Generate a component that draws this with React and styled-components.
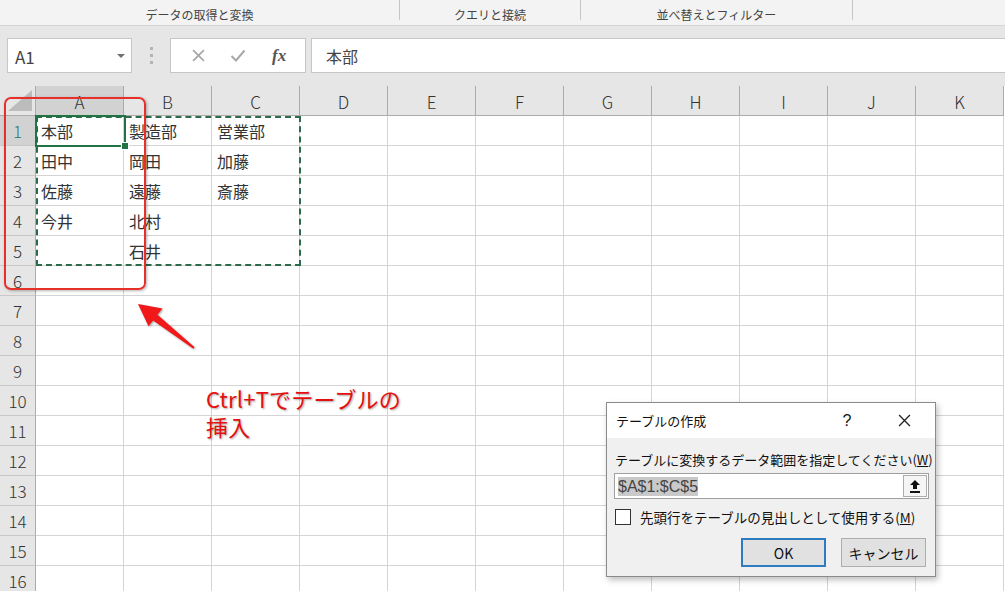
import React from 'react';
import styled, { createGlobalStyle } from 'styled-components';

const GlobalStyle = createGlobalStyle`
  html, body {
    margin: 0;
    padding: 0;
    background: #fff;
    overflow: hidden;
  }
  body {
    font-family: "Noto Sans CJK JP", "Noto Sans", sans-serif;
  }
`;

const COLS = ['A', 'B', 'C', 'D', 'E', 'F', 'G', 'H', 'I', 'J', 'K'];
const DATA = {
  1: ['本部', '製造部', '営業部'],
  2: ['田中', '岡田', '加藤'],
  3: ['佐藤', '遠藤', '斎藤'],
  4: ['今井', '北村', ''],
  5: ['', '石井', ''],
};
const ROWS = Array.from({ length: 16 }, (_, i) => i + 1);

const Page = styled.div`
  position: relative;
  width: 1005px;
  height: 591px;
  overflow: hidden;
  background: #fff;
`;

/* ribbon group labels */
const Ribbon = styled.div`
  display: flex;
  height: 25px;
  background: #f3f3f3;
  border-bottom: 1px solid #d4d4d4;
`;

const RibbonGroup = styled.div`
  width: ${p => p.w}px;
  height: 20px;
  flex-shrink: 0;
  border-right: ${p => (p.last ? 'none' : '1px solid #c6c6c6')};
  display: flex;
  justify-content: center;
  align-items: center;
  font-size: 12px;
  color: #444;
  padding-top: 9px;
  box-sizing: border-box;
`;

/* formula bar */
const FormulaArea = styled.div`
  display: flex;
  align-items: flex-start;
  height: 60px;
  background: #e6e6e6;
  padding: 12px 0 0 7px;
  box-sizing: border-box;
`;

const NameBox = styled.div`
  width: 125px;
  height: 35px;
  box-sizing: border-box;
  background: #fff;
  border: 1px solid #c6c6c6;
  display: flex;
  align-items: center;
  justify-content: space-between;
  padding: 2px 6px 0 7px;
  font-size: 17px;
  color: #444;
`;

const Caret = styled.span`
  width: 0;
  height: 0;
  border-left: 4px solid transparent;
  border-right: 4px solid transparent;
  border-top: 4px solid #707070;
  margin-top: -2px;
`;

const Grip = styled.div`
  width: 38px;
  height: 35px;
  display: flex;
  flex-direction: column;
  align-items: center;
  justify-content: center;
  gap: 4px;
  span {
    width: 3px;
    height: 3px;
    background: #b4b4b4;
  }
`;

const ButtonBox = styled.div`
  width: 136px;
  height: 35px;
  box-sizing: border-box;
  background: #fff;
  border: 1px solid #c6c6c6;
  display: flex;
  align-items: center;
  justify-content: space-around;
  padding: 0 6px 0 8px;
  margin-right: 5px;
`;

const Fx = styled.span`
  font-family: "Liberation Serif", serif;
  font-style: italic;
  font-weight: bold;
  font-size: 17px;
  color: #555;
`;

const FormulaInput = styled.div`
  flex: 1;
  height: 35px;
  box-sizing: border-box;
  background: #fff;
  border: 1px solid #c6c6c6;
  border-right: none;
  display: flex;
  align-items: center;
  padding-left: 14px;
  font-size: 16px;
  color: #444;
`;

/* sheet grid */
const Sheet = styled.div`
  display: grid;
  grid-template-columns: 36px repeat(11, 88px);
  grid-auto-rows: 30px;
`;

const Corner = styled.div`
  background: #e6e6e6;
  border-right: 1px solid #ababab;
  border-bottom: 1px solid #ababab;
  display: flex;
  align-items: flex-end;
  justify-content: flex-end;
  padding: 0 3px 4px 0;
  box-sizing: border-box;
  &::after {
    content: '';
    width: 0;
    height: 0;
    border-left: 24px solid transparent;
    border-bottom: 21px solid #bcbcbc;
  }
`;

const ColHead = styled.div`
  background: ${p => (p.active ? '#d2d2d2' : '#e6e6e6')};
  border-right: 1px solid #ababab;
  border-bottom: 1px solid #ababab;
  box-sizing: border-box;
  display: flex;
  align-items: center;
  justify-content: center;
  font-size: 17px;
  font-weight: 300;
  color: #333;
  padding-top: 2px;
`;

const RowHead = styled.div`
  background: ${p => (p.active ? '#d2d2d2' : '#e6e6e6')};
  border-right: 1px solid #ababab;
  border-bottom: 1px solid #c8c8c8;
  box-sizing: border-box;
  display: flex;
  align-items: center;
  justify-content: center;
  font-size: 17px;
  font-weight: 300;
  color: ${p => (p.active ? '#2a7a68' : '#333')};
`;

const Cell = styled.div`
  border-right: 1px solid #d4d4d4;
  border-bottom: 1px solid #d4d4d4;
  box-sizing: border-box;
  display: flex;
  align-items: center;
  padding: 1px 0 0 5px;
  font-size: 16px;
  color: #333;
  white-space: nowrap;
`;

/* overlays over the sheet */
const SelectedCell = styled.div`
  position: absolute;
  left: 35px;
  top: 115px;
  width: 91px;
  height: 32px;
  box-sizing: border-box;
  border: 2px solid #217346;
  &::after {
    content: '';
    position: absolute;
    right: -5px;
    bottom: -5px;
    width: 6px;
    height: 6px;
    background: #217346;
    border: 1px solid #fff;
  }
`;

const MarchingAnts = styled.div`
  position: absolute;
  left: 36px;
  top: 116px;
  width: 265px;
  height: 150px;
  box-sizing: border-box;
  border: 2px dashed #2d6a4a;
`;

const RedFrame = styled.div`
  position: absolute;
  left: 4px;
  top: 97px;
  width: 142px;
  height: 193px;
  box-sizing: border-box;
  border: 2px solid #e8302a;
  border-radius: 7px;
  box-shadow: 1px 1px 3px rgba(0, 0, 0, 0.3);
`;

const ArrowSvg = styled.svg`
  position: absolute;
  left: 130px;
  top: 295px;
  overflow: visible;
`;

const Note = styled.div`
  position: absolute;
  left: 206px;
  top: 384px;
  font-size: 22px;
  line-height: 28px;
  color: #e41010;
  text-shadow: 1px 1px 2px rgba(0, 0, 0, 0.35);
  letter-spacing: 0.2px;
`;

/* dialog */
const Dialog = styled.div`
  position: absolute;
  left: 606px;
  top: 402px;
  width: 330px;
  height: 175px;
  box-sizing: border-box;
  border: 1px solid #8a8a8a;
  background: #f0f0f0;
  box-shadow: 2px 3px 6px rgba(0, 0, 0, 0.25);
  display: flex;
  flex-direction: column;
  font-size: 13px;
  color: #111;
`;

const TitleBar = styled.div`
  height: 35px;
  background: #fff;
  display: flex;
  align-items: center;
  padding: 0 0 0 9px;
`;

const Title = styled.div`
  flex: 1;
`;

const Help = styled.div`
  width: 20px;
  font-family: "Liberation Sans", sans-serif;
  font-size: 16px;
  text-align: center;
  margin-right: 37px;
`;

const Close = styled.div`
  width: 20px;
  margin-right: 21px;
  display: flex;
  justify-content: center;
`;

const Body = styled.div`
  padding: 13px 7px 0 7px;
  display: flex;
  flex-direction: column;
`;

const Label = styled.div`
  line-height: 18px;
  padding-left: 1px;
  white-space: nowrap;
  u {
    text-decoration: underline;
  }
`;

const RangeField = styled.div`
  margin-top: 4px;
  height: 26px;
  width: 315px;
  box-sizing: border-box;
  border: 1px solid #a0a0a0;
  background: #fff;
  display: flex;
  align-items: center;
`;

const RangeText = styled.div`
  flex: 1;
  padding-left: 3px;
  span {
    font-family: "Liberation Sans", sans-serif;
    font-size: 16px;
    color: #444;
    background: #c9c9c9;
    padding: 1px 0;
  }
`;

const CollapseBtn = styled.div`
  width: 24px;
  height: 22px;
  margin-right: 1px;
  box-sizing: border-box;
  border: 1px solid #adadad;
  background: #f5f5f5;
  display: flex;
  align-items: center;
  justify-content: center;
`;

const CheckRow = styled.label`
  display: flex;
  align-items: center;
  margin-top: 8px;
  gap: 9px;
  padding-left: 1px;
  white-space: nowrap;
  font-size: 13.5px;
`;

const Box = styled.span`
  width: 16px;
  height: 16px;
  box-sizing: border-box;
  border: 1px solid #333;
  background: #fff;
`;

const Buttons = styled.div`
  display: flex;
  justify-content: flex-end;
  gap: 15px;
  margin-top: 11px;
  padding-right: 2px;
`;

const Button = styled.div`
  width: 85px;
  height: 29px;
  box-sizing: border-box;
  border: ${p => (p.primary ? '2px solid #2e7bc0' : '1px solid #adadad')};
  background: #e1e1e1;
  display: flex;
  align-items: center;
  justify-content: center;
  font-size: 14px;
`;

const XIcon = ({ size, color, width }) => (
  <svg width={size} height={size} viewBox="0 0 12 12">
    <path d="M1 1 L11 11 M11 1 L1 11" stroke={color} strokeWidth={width} fill="none" />
  </svg>
);

const CheckIcon = () => (
  <svg width="16" height="13" viewBox="0 0 16 13">
    <path d="M1.5 7 L6 11.5 L14.5 1.5" stroke="#a8a8a8" strokeWidth="2" fill="none" />
  </svg>
);

const UpIcon = () => (
  <svg width="12" height="14" viewBox="0 0 12 14">
    <path d="M6 1 L11 6 L8 6 L8 10 L4 10 L4 6 L1 6 Z" fill="#111" />
    <rect x="1" y="12" width="10" height="2" fill="#111" />
  </svg>
);

const App = () => {
  return (
    <Page>
      <GlobalStyle />
      <Ribbon>
        <RibbonGroup w={400}>データの取得と変換</RibbonGroup>
        <RibbonGroup w={181}>クエリと接続</RibbonGroup>
        <RibbonGroup w={272}>並べ替えとフィルター</RibbonGroup>
        <RibbonGroup w={152} last />
      </Ribbon>

      <FormulaArea>
        <NameBox>
          A1
          <Caret />
        </NameBox>
        <Grip>
          <span />
          <span />
          <span />
        </Grip>
        <ButtonBox>
          <XIcon size={13} color="#a8a8a8" width={1.6} />
          <CheckIcon />
          <Fx>fx</Fx>
        </ButtonBox>
        <FormulaInput>本部</FormulaInput>
      </FormulaArea>

      <Sheet>
        <Corner />
        {COLS.map(c => (
          <ColHead key={c} active={c === 'A'}>{c}</ColHead>
        ))}
        {ROWS.map(r => (
          <React.Fragment key={r}>
            <RowHead active={r === 1}>{r}</RowHead>
            {COLS.map((c, i) => (
              <Cell key={c}>{(DATA[r] && DATA[r][i]) || ''}</Cell>
            ))}
          </React.Fragment>
        ))}
      </Sheet>

      <MarchingAnts />
      <SelectedCell />
      <RedFrame />

      <ArrowSvg width="70" height="60" viewBox="0 0 70 60">
        <polygon
          points="8,9 32.5,13.5 27.5,19.8 64.6,52.2 63.4,53.8 23.1,25.4 18.5,31.3"
          fill="#f01818"
          style={{ filter: 'drop-shadow(1px 1px 1px rgba(0,0,0,0.35))' }}
        />
      </ArrowSvg>

      <Note>
        Ctrl+Tでテーブルの
        <br />
        挿入
      </Note>

      <Dialog>
        <TitleBar>
          <Title>テーブルの作成</Title>
          <Help>?</Help>
          <Close>
            <XIcon size={13} color="#222" width={1.2} />
          </Close>
        </TitleBar>
        <Body>
          <Label>
            テーブルに変換するデータ範囲を指定してください(<u>W</u>)
          </Label>
          <RangeField>
            <RangeText>
              <span>$A$1:$C$5</span>
            </RangeText>
            <CollapseBtn>
              <UpIcon />
            </CollapseBtn>
          </RangeField>
          <CheckRow>
            <Box />
            <span>
              先頭行をテーブルの見出しとして使用する(<u>M</u>)
            </span>
          </CheckRow>
          <Buttons>
            <Button primary>OK</Button>
            <Button>キャンセル</Button>
          </Buttons>
        </Body>
      </Dialog>
    </Page>
  );
};

export default App;
